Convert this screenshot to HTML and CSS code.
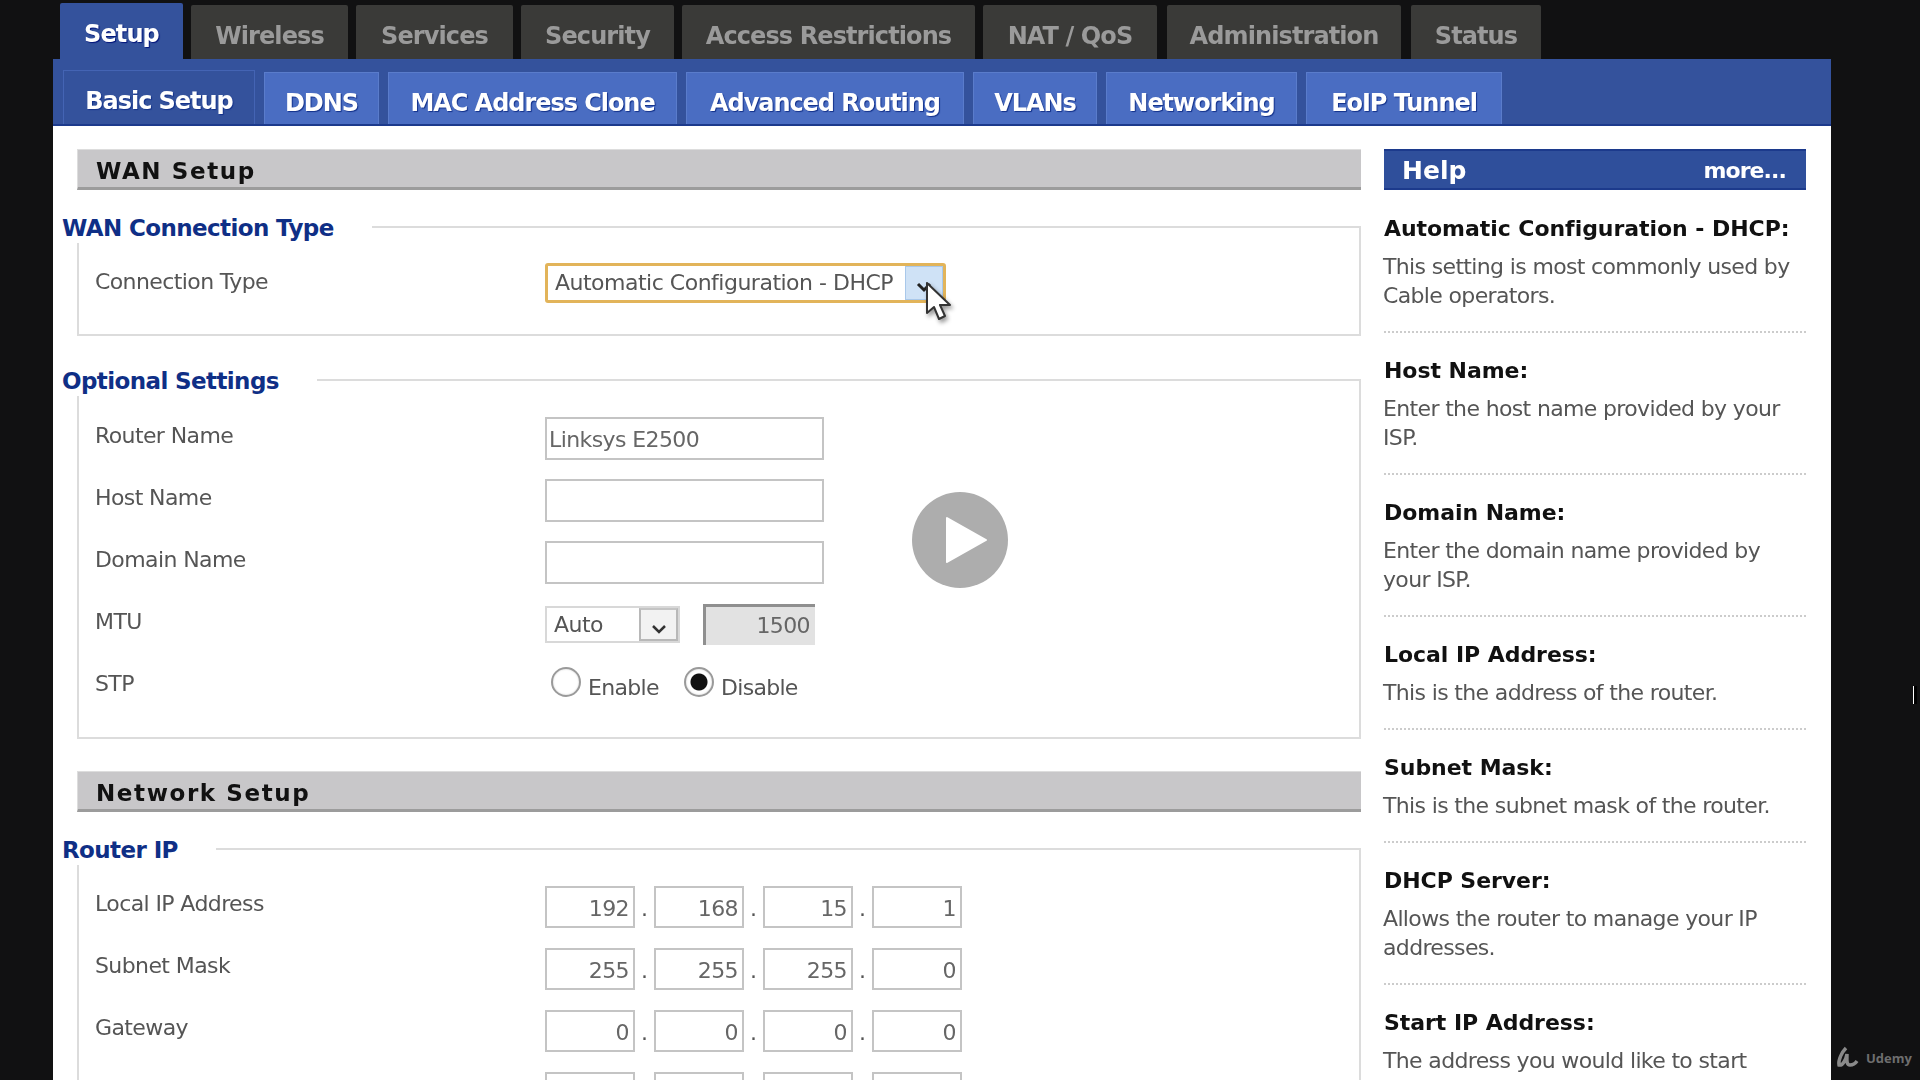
FILE: index.html
```html
<!DOCTYPE html>
<html>
	<head>
		<meta charset="UTF-8">
		<title>Basic Setup</title>
		<link rel="stylesheet" href="styles.css">
	</head>
	<body>
		<div id="wrap">
			<ul class="tabs">
				<li class="tab ac t1">Setup</li>
				<li class="tab t2">Wireless</li>
				<li class="tab t3">Services</li>
				<li class="tab t4">Security</li>
				<li class="tab t5">Access Restrictions</li>
				<li class="tab t6">NAT / QoS</li>
				<li class="tab t7">Administration</li>
				<li class="tab t8">Status</li>
			</ul>
			<div id="panel">
				<ul class="subtabs">
					<li class="sub ac s1">Basic Setup</li>
					<li class="sub s2">DDNS</li>
					<li class="sub s3">MAC Address Clone</li>
					<li class="sub s4">Advanced Routing</li>
					<li class="sub s5">VLANs</li>
					<li class="sub s6">Networking</li>
					<li class="sub s7">EoIP Tunnel</li>
				</ul>
				<div class="content">
					<div class="main">
						<h2 class="bar">WAN Setup</h2>
						<div class="group g1">
							<div class="legend">WAN Connection Type</div>
							<div class="row">
								<label>Connection Type</label>
								<div class="select focus">
									<span class="val">Automatic Configuration - DHCP</span>
									<span class="arrow"><svg width="18" height="12" viewBox="0 0 18 12"><path d="M3 3l6 6 6-6" fill="none" stroke="#222" stroke-width="3"/></svg></span>
								</div>
							</div>
						</div>
						<div class="group g2">
							<div class="legend">Optional Settings</div>
							<div class="row">
								<label>Router Name</label>
								<div class="input wide">Linksys E2500</div>
							</div>
							<div class="row">
								<label>Host Name</label>
								<div class="input wide"></div>
							</div>
							<div class="row">
								<label>Domain Name</label>
								<div class="input wide"></div>
							</div>
							<div class="row">
								<label>MTU</label>
								<div class="select small">
									<span class="val">Auto</span>
									<span class="arrow"><svg width="18" height="12" viewBox="0 0 18 12"><path d="M3 3l6 6 6-6" fill="none" stroke="#333" stroke-width="2.5"/></svg></span>
								</div>
								<div class="input disabled">1500</div>
							</div>
							<div class="row">
								<label>STP</label>
								<span class="radio"></span><span class="rtext enable">Enable</span>
								<span class="radio on"></span><span class="rtext">Disable</span>
							</div>
						</div>
						<h2 class="bar">Network Setup</h2>
						<div class="group g3">
							<div class="legend">Router IP</div>
							<div class="row">
								<label>Local IP Address</label>
								<div class="input ip">192</div><i>.</i><div class="input ip">168</div><i>.</i><div class="input ip">15</div><i>.</i><div class="input ip">1</div>
							</div>
							<div class="row">
								<label>Subnet Mask</label>
								<div class="input ip">255</div><i>.</i><div class="input ip">255</div><i>.</i><div class="input ip">255</div><i>.</i><div class="input ip">0</div>
							</div>
							<div class="row">
								<label>Gateway</label>
								<div class="input ip">0</div><i>.</i><div class="input ip">0</div><i>.</i><div class="input ip">0</div><i>.</i><div class="input ip">0</div>
							</div>
							<div class="row">
								<label>Local DNS</label>
								<div class="input ip">0</div><i>.</i><div class="input ip">0</div><i>.</i><div class="input ip">0</div><i>.</i><div class="input ip">0</div>
							</div>
						</div>
					</div>
					<div class="help">
						<div class="help-bar"><span>Help</span><a>more...</a></div>
						<dl>
							<dt>Automatic Configuration - DHCP:</dt>
							<dd>This setting is most commonly used by Cable operators.</dd>
						</dl>
						<dl>
							<dt>Host Name:</dt>
							<dd>Enter the host name provided by your ISP.</dd>
						</dl>
						<dl>
							<dt>Domain Name:</dt>
							<dd>Enter the domain name provided by your ISP.</dd>
						</dl>
						<dl>
							<dt>Local IP Address:</dt>
							<dd>This is the address of the router.</dd>
						</dl>
						<dl>
							<dt>Subnet Mask:</dt>
							<dd>This is the subnet mask of the router.</dd>
						</dl>
						<dl>
							<dt>DHCP Server:</dt>
							<dd>Allows the router to manage your IP addresses.</dd>
						</dl>
						<dl>
							<dt>Start IP Address:</dt>
							<dd>The address you would like to start<br>with.</dd>
						</dl>
					</div>
				</div>
			</div>
		</div>

		<svg class="cursor" width="34" height="44" viewBox="0 0 34 44">
			<path d="M3 2v30l7-6 5 12 6-3-5-11h10z" fill="#fff" stroke="#333" stroke-width="2" stroke-linejoin="round"/>
		</svg>
		<svg class="play" width="96" height="96" viewBox="0 0 96 96">
			<circle cx="48" cy="48" r="48" fill="#adadad"/>
			<path d="M35 26l39 22-39 22z" fill="#fff" stroke="#fff" stroke-width="2" stroke-linejoin="round"/>
		</svg>
		<div class="udemy">
			<svg width="26" height="24" viewBox="0 0 26 24"><path d="M11 2C7 6 3 14 4 19c4 1 7-6 8-11 0 5-1 11 3 11 2 0 5-1 7-4" fill="none" stroke="#8a8a8a" stroke-width="3.5"/></svg>
			<span>Udemy</span>
		</div>
		<span class="ibeam"></span>
	</body>
</html>
```

FILE: styles.css
```css
* {
	margin: 0;
	padding: 0;
	box-sizing: border-box;
}
li {
	list-style: none;
}
html, body {
	height: 1080px;
	overflow: hidden;
}
body {
	background: #111112;
	font-family: "DejaVu Sans", sans-serif;
	position: relative;
}
#wrap {
	width: 1778px;
	margin-left: 53px;
	height: 1080px;
	overflow: hidden;
	filter: blur(0.5px);
}

/* top tabs */
.tabs {
	display: flex;
	align-items: flex-end;
	height: 59px;
	padding-left: 7px;
	gap: 8px;
}
.tab {
	height: 54px;
	padding-top: 8px;
	background: #3a3a38;
	color: #9a9a9a;
	font-size: 24px;
	font-weight: bold;
	letter-spacing: -0.9px;
	line-height: 46px;
	text-align: center;
	border-radius: 2px 2px 0 0;
}
.tab.ac {
	height: 56px;
	background: #34529c;
	color: #fff;
	text-shadow: 1px 1px 1px #00137a;
}
.t1 { width: 123px; }
.t2 { width: 157px; }
.t3 { width: 157px; }
.t4 { width: 153px; }
.t5 { width: 293px; }
.t6 { width: 174px; }
.t7 { width: 234px; margin-left: 2px; }
.t8 { width: 130px; margin-left: 2px; }

#panel {
	background: #fff;
	height: 1021px;
}
.subtabs {
	display: flex;
	align-items: flex-end;
	height: 67px;
	background: #34529c;
	border-bottom: 2px solid #1c3a8c;
	padding-left: 10px;
	gap: 9px;
}
.sub {
	height: 52px;
	padding-top: 8px;
	background: #4a6dc2;
	color: #fff;
	font-size: 24px;
	font-weight: bold;
	letter-spacing: -1.05px;
	line-height: 44px;
	text-align: center;
	text-shadow: 1px 1px 1px #12308a;
	border: 1px solid #5a7ccb;
	border-bottom: 0;
}
.sub.ac {
	height: 54px;
	background: #34529c;
	border-color: #4464b4;
}
.s1 { width: 192px; }
.s2 { width: 115px; }
.s3 { width: 289px; }
.s4 { width: 278px; }
.s5 { width: 124px; }
.s6 { width: 191px; }
.s7 { width: 196px; }

.content {
	display: flex;
	padding: 23px 25px 0 10px;
}
.main {
	width: 1298px;
	flex: none;
}
.bar {
	margin-left: 14px;
	height: 41px;
	background: #c8c7c9;
	border-bottom: 3px solid #9c9c9c;
	border-left: 1px solid #ddd;
	border-top: 1px solid #ddd;
	color: #111;
	font-size: 23px;
	font-weight: bold;
	letter-spacing: 1.6px;
	line-height: 42px;
	padding-left: 18px;
}

/* fieldsets */
.group {
	margin-left: 14px;
	border: 2px solid #dcdcdc;
	position: relative;
}
.legend {
	position: absolute;
	left: -17px;
	top: -14px;
	background: #fff;
	padding-right: 38px;
	color: #0f2f86;
	font-size: 23px;
	font-weight: bold;
	letter-spacing: -0.6px;
	line-height: 29px;
}
.g1 { margin-top: 36px; height: 110px; padding-top: 39px; }
.g2 { margin-top: 43px; margin-bottom: 32px; height: 360px; padding-top: 40px; }
.g3 { margin-top: 36px; height: 300px; padding-top: 39px; border-bottom: 0; }

.row {
	display: flex;
	align-items: flex-start;
	height: 62px;
	padding-left: 16px;
}
.row label {
	width: 450px;
	flex: none;
	color: #555;
	font-size: 22px;
	letter-spacing: -0.6px;
	line-height: 29px;
}

.input {
	border: 2px solid #c4c4c4;
	background: #fff;
	color: #666;
	font-size: 22px;
	letter-spacing: -0.6px;
}
.wide {
	width: 279px;
	height: 43px;
	margin-top: -4px;
	line-height: 42px;
	padding-left: 2px;
}
.select {
	display: flex;
	font-size: 22px;
	color: #555;
	background: #fff;
	letter-spacing: -0.5px;
}
.select .val {
	flex: 1;
	padding-left: 7px;
}
.select .arrow {
	display: flex;
	align-items: center;
	justify-content: center;
	padding-top: 8px;
}
.focus {
	width: 401px;
	height: 40px;
	line-height: 34px;
	margin-top: -4px;
	border: 3px solid #e2b45a;
	border-radius: 3px;
}
.focus .arrow {
	width: 38px;
	background: #cfe2f6;
	border: 1px solid #a9c8ea;
}
.small {
	width: 135px;
	height: 37px;
	line-height: 33px;
	margin-top: -1px;
	border: 2px solid #d8d8d8;
}
.small .arrow {
	width: 39px;
	background: #f2f2f2;
	border: 2px solid #b8b8b8;
	border-top-color: #c4c4c4;
}
.disabled {
	width: 112px;
	height: 41px;
	margin-left: 23px;
	margin-top: -3px;
	background: #e2e2e2;
	border: 0;
	border-top: 3px solid #8f8f8f;
	border-left: 3px solid #8f8f8f;
	color: #666;
	text-align: right;
	line-height: 38px;
	padding-right: 5px;
}
.radio {
	width: 30px;
	height: 30px;
	border-radius: 50%;
	border: 2px solid #9a9a9a;
	background: #fff;
	margin-left: 6px;
	margin-top: -2px;
	flex: none;
	box-shadow: inset 0 0 2px #ccc;
}
.radio.on {
	background: radial-gradient(circle, #111 0 8px, #fff 9px);
}
.rtext {
	color: #555;
	font-size: 22px;
	letter-spacing: -0.7px;
	line-height: 29px;
	margin-left: 7px;
	margin-top: 4px;
}
.rtext.enable {
	width: 90px;
}
.ip {
	width: 90px;
	height: 42px;
	margin-top: -3px;
	text-align: right;
	padding-right: 4px;
	line-height: 42px;
}
.row i {
	width: 19px;
	margin-top: -3px;
	font-style: normal;
	text-align: center;
	color: #555;
	font-size: 22px;
	line-height: 46px;
}

/* help column */
.help {
	width: 422px;
	margin-left: 23px;
	flex: none;
}
.help-bar {
	display: flex;
	justify-content: space-between;
	height: 41px;
	background: #2f4f9b;
	border-top: 2px solid #1c3a8c;
	border-bottom: 2px solid #1c3a8c;
	color: #fff;
	padding: 0 20px 0 18px;
	line-height: 40px;
	font-weight: bold;
}
.help-bar span {
	font-size: 25px;
}
.help-bar a {
	font-size: 22px;
	letter-spacing: -0.9px;
}
dl {
	padding-bottom: 21px;
	border-bottom: 2px dotted #ccc;
	margin-bottom: 23px;
}
.help-bar + dl {
	margin-top: 24px;
}
dt {
	color: #111;
	font-size: 22px;
	font-weight: bold;
	letter-spacing: -0.05px;
	line-height: 29px;
	margin-bottom: 9px;
}
dd {
	margin-left: -1px;
	color: #555;
	font-size: 22px;
	letter-spacing: -0.65px;
	line-height: 29px;
}

/* overlays on the video */
.cursor {
	position: absolute;
	left: 924px;
	top: 281px;
	filter: drop-shadow(2px 3px 2px rgba(0,0,0,0.4));
}
.play {
	position: absolute;
	left: 912px;
	top: 492px;
}
.udemy {
	position: absolute;
	left: 1835px;
	top: 1046px;
	display: flex;
	align-items: center;
	gap: 5px;
	color: #6e6e6e;
	font-family: "Open Sans", sans-serif;
	font-size: 13px;
	font-weight: bold;
}
.ibeam {
	position: absolute;
	left: 1913px;
	top: 686px;
	width: 4px;
	height: 18px;
	background: #000;
	border-left: 1px solid #fff;
}
```
